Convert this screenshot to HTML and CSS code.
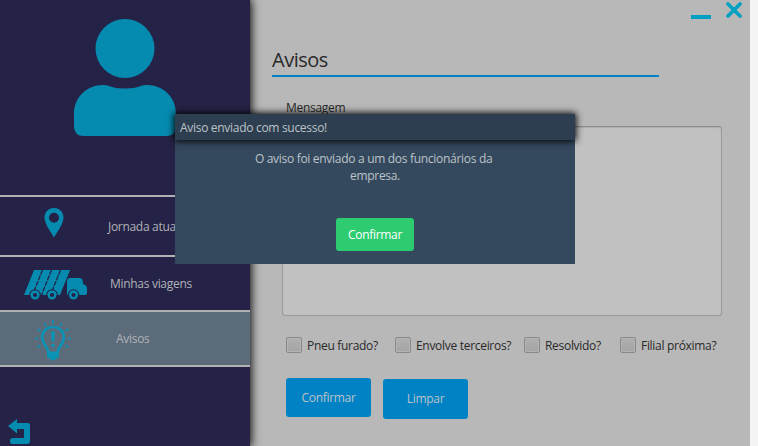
FILE: index.html
```html
<!DOCTYPE html>
<html lang="pt-BR">
<head>
<meta charset="utf-8">
<title>Avisos</title>
<link rel="stylesheet" href="styles.css">
</head>
<body>
<div class="app">
  <aside class="sidebar">
    <div class="profile">
      <svg class="avatar" width="102" height="118" viewBox="0 0 102 118"><circle cx="51" cy="29.5" r="29.5"/><path d="M0 95C0 78 13 66 29 66C36 66 37 69.500 51 69.500C65 69.500 66 66 73 66C89 66 102 78 102 95V107Q102 117 92 117H10Q0 117 0 107Z"/></svg>
    </div>
    <nav>
      <a class="item journey"><svg class="pin" width="20" height="30" viewBox="0 0 20 30"><path fill-rule="evenodd" d="M10 0C4 0 .5 4.500 .5 9.500C.5 16 7 24 10 29.500C13 24 19.500 16 19.500 9.500C19.500 4.500 16 0 10 0ZM10 4.700A5 5 0 1 1 10 14.700A5 5 0 1 1 10 4.700Z"/></svg><span>Jornada atual</span></a>
      <a class="item trips"><svg class="truck" width="64" height="30" viewBox="0 0 64 30"><path d="M10 0H46L36 25H0Z"/><g class="cut"><path d="M18.500 0L8.500 25M27.500 0L17.500 25M36.500 0L26.500 25" stroke-dasharray="5 1"/></g><path d="M46 8H56Q59 8 59 14Q63 15 63 19V23Q63 25 61 25H43V11Q43 8 46 8Z"/><g class="wheel-gaps"><circle cx="11" cy="25" r="5.200"/><circle cx="28" cy="25" r="5.200"/><circle cx="49.500" cy="25" r="5.200"/></g><g class="wheels"><circle cx="11" cy="25" r="3.300"/><circle cx="28" cy="25" r="3.300"/><circle cx="49.500" cy="25" r="3.300"/></g></svg><span>Minhas viagens</span></a>
      <a class="item notices"><svg class="bulb" width="36" height="41" viewBox="0 0 36 41"><path class="ray" d="M18 0V3.500M9.500 3L11 6M26.500 3L25 6M2.500 9L5.500 11M33.500 9L30.500 11M0 18.500H3.500M32.500 18.500H36M2.500 27L5.500 25.500M33.500 27L30.500 25.500"/><path class="glass" d="M13.500 33C13.500 26.500 7.200 25 7.200 17.500C7.200 11 12 7 18 7C24 7 28.800 11 28.800 17.500C28.800 25 22.500 26.500 22.500 33"/><path d="M12 31.500H24V36Q24 38.500 21 38.500Q20.500 40.500 18 40.500Q15.500 40.500 15 38.500Q12 38.500 12 36ZM16 12Q18 10.500 20 12L19.400 21.500H16.600Z"/><circle cx="18" cy="25.500" r="1.800"/></svg><span>Avisos</span></a>
    </nav>
    <svg class="back" width="22" height="25" viewBox="0 0 22 25"><path d="M0 7L9 0V4H20Q22 4 22 6V22Q22 25 19 25H4Q2 25 2 22Q2 19 5 19H16V10H9V14.500Z"/></svg>
  </aside>
  <main class="content">
    <div class="window-controls"><i class="minimize"></i><svg class="close" width="16" height="16" viewBox="0 0 16 16"><path d="M2 2L14 14M14 2L2 14"/></svg></div>
    <h1><span>Avisos</span></h1>
    <label class="field-label"><span>Mensagem</span></label>
    <div class="message"></div>
    <div class="checks">
      <label><i class="box"></i><span>Pneu furado?</span></label>
      <label><i class="box"></i><span>Envolve terceiros?</span></label>
      <label><i class="box"></i><span>Resolvido?</span></label>
      <label><i class="box"></i><span>Filial próxima?</span></label>
    </div>
    <div class="actions"><button class="confirm">Confirmar</button><button class="clear">Limpar</button></div>
  </main>
</div>
<section class="dialog">
  <header>Aviso enviado com sucesso!</header>
  <p>O aviso foi enviado a um dos funcionários da&nbsp;<br>empresa.</p>
  <button>Confirmar</button>
</section>
</body>
</html>
```
FILE: styles.css
```css
* { box-sizing: border-box; }
body { margin: 0; width: 758px; height: 446px; overflow: hidden; background: #f4f4f4; font: 12px/17px "Open Sans", "Noto Sans", sans-serif; letter-spacing: -.3px; }
button { border: 0; padding: 0; font: inherit; letter-spacing: inherit; }
svg { display: block; flex: none; fill: #068bb0; }
.app { display: flex; width: 750px; height: 446px; background: #b8b8b8; }
.sidebar { position: relative; z-index: 1; flex: none; display: flex; flex-direction: column; width: 250px; background: #242347; box-shadow: 0 0 9px 1px #000; }
.profile { height: 195px; padding: 19px 0 0 74px; }
.item { display: flex; align-items: center; border-top: 2px solid #b1b1b3; color: #b1b1b6; white-space: nowrap; }
.journey { height: 60px; }
.trips { height: 55px; }
.notices { height: 57px; border-bottom: 2px solid #b1b1b3; background: #5c6b7a; color: #aeb3b8; }
.pin { margin: -6px 34px 0 44px; }
.journey span { margin-left: 10px; }
.truck { margin: 2px 22px 0 24px; }
.cut { fill: none; stroke: #242347; stroke-width: 1.3; }
.wheel-gaps { fill: none; stroke: #242347; stroke-width: 1.2; }
.wheels { fill: #242347; stroke: #068bb0; stroke-width: 2.4; }
.bulb { margin: 3px 45px 0 35px; fill: #0b93b6; }
.ray, .glass { fill: none; stroke: #0b93b6; stroke-width: 1.7; }
.glass { stroke-width: 2.7; }
.back { margin: 52px 0 0 8px; }
.content { display: flex; flex-direction: column; flex: 1; padding-left: 22px; color: #292929; }
.window-controls { display: flex; justify-content: flex-end; height: 46px; padding: 2px 8px 0 0; gap: 15px; }
.minimize { width: 20px; height: 4px; margin-top: 13px; background: #00a0c2; }
.close { fill: none; stroke: #00a0c2; stroke-width: 3.6; stroke-linecap: round; }
h1 { width: 387px; height: 31px; margin: 0; border-bottom: 2px solid #0082c5; font-weight: 400; font-size: 20px; line-height: 28px; letter-spacing: -.5px; }
.field-label { height: 49px; padding: 22px 0 0 14px; }
.message { width: 440px; height: 190px; margin-left: 10px; border: 1px solid #999; border-top-color: #8d8d8d; border-radius: 3px; background: #c1c1c1; box-shadow: inset 0 1px 1px #aaa; }
.checks { display: flex; height: 62px; padding: 21px 0 0 14px; }
.checks label { display: flex; align-items: flex-start; gap: 5px; height: 17px; white-space: nowrap; }
.checks label:nth-child(1) { width: 109px; }
.checks label:nth-child(2) { width: 129px; }
.checks label:nth-child(3) { width: 96px; }
.box { flex: none; width: 16px; height: 16px; border: 1px solid #898989; border-radius: 2px; background: linear-gradient(#b0b0b0, #a4a4a4); box-shadow: inset 0 0 0 1px #b4b4b4; }
.actions { display: flex; gap: 12px; padding-left: 14px; }
.actions button { width: 85px; height: 39px; border-radius: 3px; background: #0082c5; color: #bcc3c7; }
.actions .clear { height: 40px; margin-top: 1px; padding-bottom: 1px; }
.dialog { position: absolute; z-index: 2; left: 175px; top: 114px; width: 400px; height: 150px; background: #34495e; color: #bdc3c7; text-align: center; }
.dialog header { height: 26px; padding: 5px; background: #2c3e50; box-shadow: 0 0 7px 1px #000; text-align: left; }
.dialog p { height: 78px; margin: 0; padding: 10px 0 0; }
.dialog button { width: 78px; height: 33px; border-radius: 3px; background: #2ecc71; color: #fff; }
```
